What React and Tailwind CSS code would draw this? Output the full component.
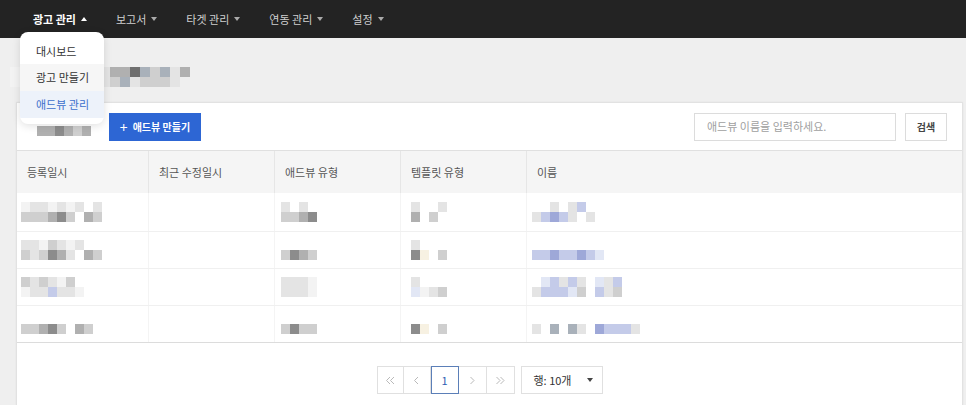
import React from 'react';

const SHADE = {
  '.': 'bg-transparent',
  w: 'bg-[#f3f3f3]',
  l: 'bg-[#e4e4e4]',
  m: 'bg-[#cfcfcf]',
  d: 'bg-[#b0b0b0]',
  k: 'bg-[#8c8c8c]',
  x: 'bg-[#6f6f6f]',
  s: 'bg-[#a9b1ba]',
  p: 'bg-[#e2e7f5]',
  b: 'bg-[#c4cbe9]',
  B: 'bg-[#9ea8d8]',
  y: 'bg-[#f7f1e2]',
};

// blurred (mosaic) content, one string per band
function Mosaic({ bands, size = 'w-[9px] h-[10px]' }) {
  return (
    <div className="flex flex-col">
      {bands.map((band, i) => (
        <div key={i} className="flex">
          {band.split('').map((c, j) => (
            <div key={j} className={`${size} ${SHADE[c]}`} />
          ))}
        </div>
      ))}
    </div>
  );
}

function Caret({ up, className }) {
  return (
    <svg width="6" height="4" viewBox="0 0 6 4" className={className}>
      {up ? <path d="M3 0 L6 4 L0 4 Z" fill="currentColor" /> : <path d="M0 0 L6 0 L3 4 Z" fill="currentColor" />}
    </svg>
  );
}

function Chevron({ dir = 'left', double }) {
  const d = dir === 'left' ? 'M5 1 L1.5 4.5 L5 8' : 'M1.5 1 L5 4.5 L1.5 8';
  return (
    <svg width={double ? 11 : 7} height="9" viewBox={double ? '0 0 11 9' : '0 0 7 9'} fill="none" stroke="#b9b9b9" strokeWidth="1">
      <path d={d} />
      {double && <path d={d} transform="translate(4 0)" />}
    </svg>
  );
}

const navItems = [
  { label: '광고 관리', active: true },
  { label: '보고서' },
  { label: '타겟 관리' },
  { label: '연동 관리' },
  { label: '설정' },
];

const columns = [
  { label: '등록일시', w: 'w-[132px]' },
  { label: '최근 수정일시', w: 'w-[126px]' },
  { label: '애드뷰 유형', w: 'w-[126px]' },
  { label: '템플릿 유형', w: 'w-[126px]' },
  { label: '이름', w: 'flex-1' },
];

const rows = [
  {
    h: 'h-[38px]',
    c1: ['wllwlwl.l.', 'mmmdkm.dm.'],
    c3: ['l.l..', 'mmdk.'],
    c4: ['l..l', 'd.m.'],
    c5: ['..l.lb....', 'lbBbl.l...'],
  },
  {
    h: 'h-[37px]',
    c1: ['llwmlwl...', 'mlmkdl.dm.'],
    c3: ['.....', 'mkdm.'],
    c4: ['l...', 'ky.m'],
    c5: ['..........', 'bbBbbBbp..'],
  },
  {
    h: 'h-[37px]',
    c1: ['mlmlwm....', 'wllbllw...'],
    c3: ['lllw.', 'lllw.'],
    c4: ['l...', 'pwlm'],
    c5: ['.pblbl.plb', 'lbbbpm.blm'],
  },
  {
    h: 'h-[37px]',
    c1: ['..........', 'mmdkm.dm..'],
    c3: ['.....', 'mkmm.'],
    c4: ['....', 'ky.m'],
    c5: ['...........', 'l.s.sl.Bbbbl'],
  },
];

export default function App() {
  return (
    <div className="min-h-screen bg-[#efefef] font-['Noto_Sans_CJK_KR','Noto_Sans',sans-serif] text-[#333]">
      {/* Top nav */}
      <nav className="relative h-[38px] bg-[#232323] flex items-center pl-[33px] gap-[29px] z-20">
        {navItems.map((item) => (
          <div
            key={item.label}
            className={`flex items-center gap-[5px] text-[11px] ${item.active ? 'text-white font-bold' : 'text-[#cfcfcf]'}`}
          >
            <span>{item.label}</span>
            <Caret up={item.active} className={item.active ? 'text-white' : 'text-[#aaa]'} />
          </div>
        ))}

        {/* Dropdown */}
        <div className="absolute left-[20px] top-[32px] w-[84px] bg-white rounded-lg shadow-[0_2px_8px_rgba(0,0,0,0.12)] py-[6px] overflow-hidden">
          <div className="h-[26px] flex items-center pl-[16px] text-[11px] text-[#333]">대시보드</div>
          <div className="h-[27px] flex items-center pl-[16px] text-[11px] text-[#333] bg-[#f6f6f6]">광고 만들기</div>
          <div className="h-[27px] flex items-center pl-[16px] text-[11px] text-[#3d6fcc] bg-[#edf2fa]">애드뷰 관리</div>
        </div>
      </nav>

      {/* Page title (blurred) */}
      <div className="h-[64px] flex items-start pt-[29px] pl-[10px]">
        <Mosaic
          size="w-[10px] h-[10px]"
          bands={['wlllllllllddxsmsld', 'wwwwwwwwwlmslmmml.']}
        />
      </div>

      {/* Card */}
      <div className="ml-4 mr-[3px] bg-white border border-[#e2e2e2] shadow-[0_0_2px_rgba(0,0,0,0.05)] pb-[11px]">
        {/* Toolbar */}
        <div className="h-[47px] flex items-center pl-[20px] pr-[15px]">
          <div className="w-[72px] flex items-center pt-[8px]">
            <Mosaic size="w-[9px] h-[10px]" bands={['ddkdmd']} />
          </div>
          <button className="h-[28px] w-[92px] bg-[#2d66d4] text-white text-[10px] font-bold flex items-center justify-center gap-[5px]">
            <span className="text-[14px] leading-none font-normal">+</span>
            <span>애드뷰 만들기</span>
          </button>
          <div className="flex-1" />
          <div className="h-[28px] w-[202px] border border-[#dcdcdc] flex items-center px-[12px] text-[11px] text-[#a0a0a0]">
            애드뷰 이름을 입력하세요.
          </div>
          <button className="ml-[9px] h-[28px] w-[42px] border border-[#dcdcdc] text-[10px] font-bold text-[#444] flex items-center justify-center">
            검색
          </button>
        </div>

        {/* Table header */}
        <div className="flex h-[43px] bg-[#f5f5f5] border-t border-[#e0e0e0]">
          {columns.map((c, i) => (
            <div
              key={c.label}
              className={`${c.w} flex items-center pl-[10px] text-[11px] text-[#555] ${i < 4 ? 'border-r border-[#e6e6e6]' : ''}`}
            >
              {c.label}
            </div>
          ))}
        </div>

        {/* Table body */}
        <div className="border-b border-[#dcdcdc]">
          {rows.map((r, i) => (
            <div key={i} className={`flex ${r.h} ${i > 0 ? 'border-t border-[#f0f0f0]' : ''}`}>
              <div className="w-[132px] flex items-center pl-[4px] border-r border-[#f4f4f4]">
                <Mosaic bands={r.c1} />
              </div>
              <div className="w-[126px] border-r border-[#f4f4f4]" />
              <div className="w-[126px] flex items-center pl-[6px] border-r border-[#f4f4f4]">
                <Mosaic bands={r.c3} />
              </div>
              <div className="w-[126px] flex items-center pl-[10px] border-r border-[#f4f4f4]">
                <Mosaic bands={r.c4} />
              </div>
              <div className="flex-1 flex items-center pl-[5px]">
                <Mosaic bands={r.c5} />
              </div>
            </div>
          ))}
        </div>

        {/* Pagination */}
        <div className="flex items-center justify-center pt-[23px]">
          <div className="flex h-[28px]">
            <div className="w-[27px] border border-[#e0e0e0] flex items-center justify-center"><Chevron double /></div>
            <div className="w-[27px] border border-l-0 border-[#e0e0e0] flex items-center justify-center"><Chevron /></div>
            <div className="w-[28px] border border-[#5b7fb8] flex items-center justify-center text-[11px] text-[#2d5fb3]">1</div>
            <div className="w-[28px] border border-l-0 border-[#e0e0e0] flex items-center justify-center"><Chevron dir="right" /></div>
            <div className="w-[28px] border border-l-0 border-[#e0e0e0] flex items-center justify-center"><Chevron dir="right" double /></div>
          </div>
          <div className="ml-[6px] h-[28px] w-[82px] border border-[#e0e0e0] flex items-center justify-between pl-[12px] pr-[9px] text-[11px] text-[#333]">
            <span>행: 10개</span>
            <Caret className="text-[#444]" />
          </div>
        </div>
      </div>
    </div>
  );
}
